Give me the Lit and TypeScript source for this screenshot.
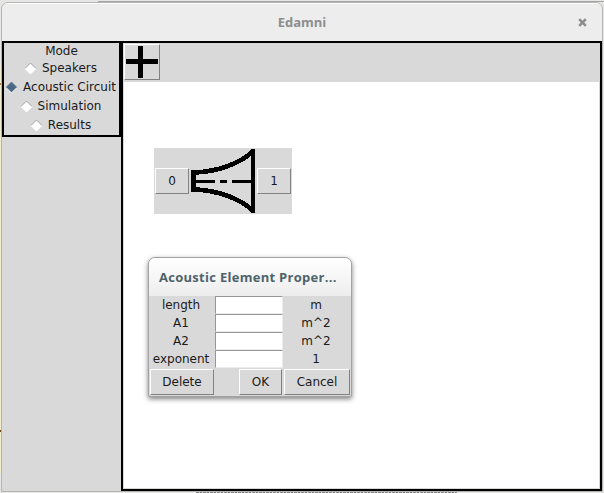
import { LitElement, html, css, svg } from "lit";
import { customElement, property } from "lit/decorators.js";

@customElement("mode-option")
class ModeOption extends LitElement {
  @property() label = "";
  @property({ type: Boolean }) checked = false;
  static styles = css`
    :host { display: flex; align-items: center; justify-content: center; height: 19px; padding-right: 2px; }
    svg { display: block; width: 13px; height: 13px; flex: none; margin-right: 5px; }
    .label { white-space: nowrap; line-height: 19px; }
  `;
  render() {
    return html`
      <svg viewBox="0 0 13 13">
        <path d="M1 6.5 6.5 1 12 6.5 6.5 12Z" fill=${this.checked ? "#4a6984" : "#fff"} />
        <path d="M1 6.5 6.5 1 12 6.5" fill="none" stroke=${this.checked ? "#5d7890" : "#989898"} stroke-width=".9" />
        <path d="M1 6.5 6.5 12 12 6.5" fill="none" stroke="#fff" />
      </svg>
      <span class="label">${this.label}</span>
    `;
  }
}

@customElement("tk-button")
class TkButton extends LitElement {
  static styles = css`
    :host {
      display: flex; align-items: center; justify-content: center;
      box-sizing: border-box; flex: none;
      border: 1px solid; border-color: #fff #828282 #828282 #fff;
      background: #d9d9d9; line-height: 14px;
    }
  `;
  render() {
    return html`<slot></slot>`;
  }
}

@customElement("property-dialog")
class PropertyDialog extends LitElement {
  rows = [
    ["length", "m"],
    ["A1", "m^2"],
    ["A2", "m^2"],
    ["exponent", "1"],
  ];
  static styles = css`
    :host {
      display: block; box-sizing: border-box; width: 204px; height: 140px;
      border: 1px solid #a3a3a3; border-radius: 7px 7px 2px 2px;
      background: #d9d9d9; box-shadow: 0 2px 5px rgba(0, 0, 0, .5); overflow: hidden;
    }
    .title {
      height: 38px; padding-left: 10px; white-space: nowrap; letter-spacing: .28px;
      font: 700 13px/39px "Open Sans", "Noto Sans", sans-serif; color: #4f636b;
      background: linear-gradient(#fff, #ededed);
    }
    .row { display: grid; grid-template-columns: 66px 68px 68px; height: 18px; line-height: 18px; text-align: center; }
    .text { padding-right: 2px; }
    .entry {
      box-sizing: border-box; border: 1px solid; border-color: #969696 #ececec #ececec #969696; background: #fff;
    }
    .actions { display: flex; padding: 1px 1px 0; height: 26px; }
    .delete { width: 64px; height: 26px; margin-right: auto; }
    .ok { width: 43px; height: 26px; margin-right: 2px; }
    .cancel { width: 66px; height: 26px; }
  `;
  render() {
    return html`
      <div class="title">Acoustic Element Proper...</div>
      ${this.rows.map(
        ([name, unit]) => html`<div class="row"><span class="text">${name}</span><span class="entry"></span><span class="text">${unit}</span></div>`
      )}
      <div class="actions">
        <tk-button class="delete">Delete</tk-button>
        <tk-button class="ok">OK</tk-button>
        <tk-button class="cancel">Cancel</tk-button>
      </div>
    `;
  }
}

const horn = svg`
  <rect x="0" y="22" width="5" height="22"/>
  <rect x="60" y="1" width="4" height="64"/>
  <path d="M4 24.5C26 23.5 49 16 62 3M4 41.5C26 42.5 49 50 62 63" fill="none" stroke="#000" stroke-width="4.7"/>
  <path d="M5 33.5H24M29 33.5H36M41 33.5H60" fill="none" stroke="#000" stroke-width="3"/>
`;

@customElement("app-root")
class AppRoot extends LitElement {
  static styles = css`
    :host {
      display: block; position: relative; width: 604px; height: 493px; overflow: hidden;
      background: #e6e6e5; color: #1a1a1a; font: 12px "DejaVu Sans", sans-serif;
    }
    .behind { position: absolute; }
    .sheet { left: 98px; top: 0; width: 506px; height: 2px; background: #e5e7e4; border-bottom: 1px solid #a6a6a6; box-sizing: border-box; }
    .edge { left: 0; top: 66px; width: 1px; height: 408px; background: #efedcd; }
    .mark { left: 0; width: 2px; height: 2px; background: #6e4010; }
    .mark-a { top: 83px; background: #a98352; }
    .mark-b { top: 430px; }
    .below { left: 196px; top: 492px; width: 261px; height: 1px; background: repeating-linear-gradient(90deg, #888 0 3px, #ccc 3px 4px, #777 4px 6px, #ddd 6px 7px); }
    .window {
      position: absolute; left: 1px; top: 2px; width: 602px; height: 490px; box-sizing: border-box;
      border: 1px solid #b5b5b5; border-radius: 7px 7px 0 0; background: #d9d9d9; overflow: hidden;
      display: flex; flex-direction: column;
    }
    .titlebar {
      height: 38px; flex: none; display: grid; grid-template-columns: 1fr auto 1fr; align-items: center;
      background: #ededed; box-shadow: inset 0 1px #fff;
      font: 700 13px "Open Sans", "Noto Sans", sans-serif; color: #8c8e8e;
    }
    .name { grid-column: 2; }
    .close { justify-self: end; width: 9px; height: 9px; margin-right: 15px; }
    .body { display: flex; flex: 1; }
    .modes {
      box-sizing: border-box; width: 119px; height: 96px; border: 2px solid #000; text-align: center;
    }
    .heading { height: 16px; line-height: 16px; }
    .main { box-sizing: border-box; width: 481px; height: 450px; border: 2px solid #000; display: flex; flex-direction: column; }
    .toolbar { height: 39px; flex: none; padding: 1px 0 0 1px; box-sizing: border-box; }
    .add { width: 36px; height: 36px; }
    .add svg, .close svg { display: block; }
    .canvas { position: relative; flex: 1; margin: 0 1px 1px; background: #fff; }
    .horn {
      position: absolute; left: 30px; top: 66px; width: 138px; height: 66px; box-sizing: border-box;
      background: #d9d9d9; display: flex; align-items: center; padding: 0 0 0 1px;
    }
    .port { width: 34px; height: 26px; }
    .horn svg { display: block; width: 64px; height: 66px; margin: 0 2px; }
    property-dialog { position: absolute; left: 24px; top: 175px; }
  `;
  render() {
    return html`
      <div class="behind sheet"></div>
      <div class="behind edge"></div>
      <div class="behind mark mark-a"></div>
      <div class="behind mark mark-b"></div>
      <div class="behind below"></div>
      <div class="window">
        <div class="titlebar">
          <span class="name">Edamni</span>
          <span class="close">
            <svg width="9" height="9" viewBox="0 0 9 9"><path d="M1.2 1.2 7.8 7.8M7.8 1.2 1.2 7.8" stroke="#8c8e8e" stroke-width="2.6"/></svg>
          </span>
        </div>
        <div class="body">
          <div class="modes">
            <div class="heading">Mode</div>
            <mode-option label="Speakers"></mode-option>
            <mode-option label="Acoustic Circuit" checked></mode-option>
            <mode-option label="Simulation"></mode-option>
            <mode-option label="Results"></mode-option>
          </div>
          <div class="main">
            <div class="toolbar">
              <tk-button class="add">
                <svg width="32" height="32" viewBox="0 0 32 32"><path d="M12 0h5v13h15v5H17v14h-5V18H0v-5h12z"/></svg>
              </tk-button>
            </div>
            <div class="canvas">
              <div class="horn">
                <tk-button class="port">0</tk-button>
                <svg viewBox="0 0 64 66" shape-rendering="crispEdges">${horn}</svg>
                <tk-button class="port">1</tk-button>
              </div>
              <property-dialog></property-dialog>
            </div>
          </div>
        </div>
      </div>
    `;
  }
}
